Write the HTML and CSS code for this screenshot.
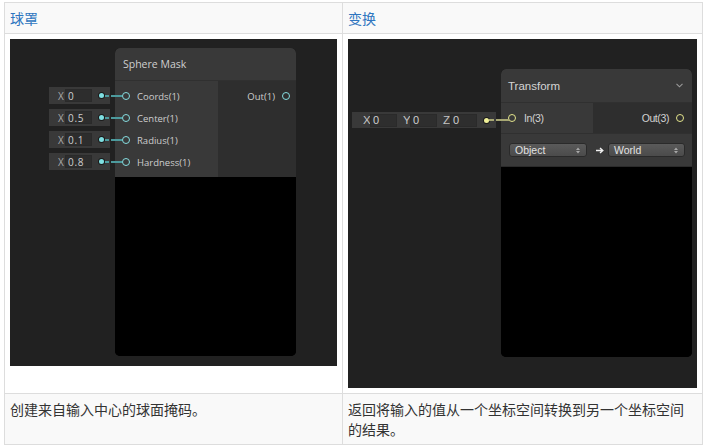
FILE: index.html
```html
<!DOCTYPE html>
<html>
<head>
<meta charset="utf-8">
<link rel="stylesheet" href="styles.css">
</head>
<body>
<table class="nodes">
  <colgroup><col class="c1"><col class="c2"></colgroup>
  <thead>
    <tr><th>球罩</th><th>变换</th></tr>
  </thead>
  <tbody>
    <tr class="pics">
      <td>
        <div class="canvas canvas-sm">
          <div class="fields">
            <div class="vfield"><span class="ax">X</span><span class="val">0</span><span class="dot"></span><span class="wire"></span></div>
            <div class="vfield"><span class="ax">X</span><span class="val">0.5</span><span class="dot"></span><span class="wire"></span></div>
            <div class="vfield"><span class="ax">X</span><span class="val">0.1</span><span class="dot"></span><span class="wire"></span></div>
            <div class="vfield"><span class="ax">X</span><span class="val">0.8</span><span class="dot"></span><span class="wire"></span></div>
          </div>
          <div class="node node-sphere">
            <div class="node-head">Sphere Mask</div>
            <div class="ports">
              <div class="ins">
                <div class="port"><i class="ring"></i>Coords(1)</div>
                <div class="port"><i class="ring"></i>Center(1)</div>
                <div class="port"><i class="ring"></i>Radius(1)</div>
                <div class="port"><i class="ring"></i>Hardness(1)</div>
              </div>
              <div class="outs">
                <div class="port port-out">Out(1)<i class="ring"></i></div>
              </div>
            </div>
            <div class="preview"></div>
          </div>
        </div>
      </td>
      <td>
        <div class="canvas canvas-lg">
          <div class="vec3">
            <span class="ax">X</span><span class="val">0</span>
            <span class="ax">Y</span><span class="val">0</span>
            <span class="ax">Z</span><span class="val">0</span>
            <span class="dot"></span><span class="wire"></span>
          </div>
          <div class="node node-transform">
            <div class="node-head">
              <span>Transform</span>
              <svg class="chev" width="7" height="5" viewBox="0 0 7 5"><polyline points="0.5,0.8 3.5,3.8 6.5,0.8" fill="none" stroke="#9a9a9a" stroke-width="1.1"/></svg>
            </div>
            <div class="ports">
              <div class="ins">
                <div class="port"><i class="ring"></i>In(3)</div>
              </div>
              <div class="outs">
                <div class="port port-out">Out(3)<i class="ring"></i></div>
              </div>
            </div>
            <div class="controls">
              <div class="select sel-a">Object<svg class="updown" width="4" height="7" viewBox="0 0 4 7"><path d="M0 3 L2 0.5 L4 3 Z M0 4 L2 6.5 L4 4 Z" fill="#a8a8a8"/></svg></div>
              <svg class="arrow" width="8" height="7" viewBox="0 0 8 7"><path d="M0 3.5 H6.5 M4 1 L6.8 3.5 L4 6" fill="none" stroke="#f0f0f0" stroke-width="1.4"/></svg>
              <div class="select sel-b">World<svg class="updown" width="4" height="7" viewBox="0 0 4 7"><path d="M0 3 L2 0.5 L4 3 Z M0 4 L2 6.5 L4 4 Z" fill="#a8a8a8"/></svg></div>
            </div>
            <div class="preview"></div>
          </div>
        </div>
      </td>
    </tr>
    <tr class="desc">
      <td>创建来自输入中心的球面掩码。</td>
      <td>返回将输入的值从一个坐标空间转换到另一个坐标空间的结果。</td>
    </tr>
  </tbody>
</table>
</body>
</html>
```

FILE: styles.css
```css
* { box-sizing: border-box; }

body {
  margin: 2px 0 0 4px;
  background: #fff;
  font-family: "Noto Sans CJK SC", sans-serif;
  font-size: 14px;
  color: #333;
}

.nodes {
  border-collapse: collapse;
  table-layout: fixed;
  width: 698px;
}
.c1 { width: 338px; }
.c2 { width: 360px; }

.nodes th,
.nodes td {
  border: 1px solid #ddd;
  padding: 5px;
  text-align: left;
  vertical-align: top;
  line-height: 20px;
}
.nodes th {
  font-weight: normal;
  color: #2f76c0;
  background: #f9f9f9;
}
.desc td { background: #f9f9f9; }
.pics td { background: #fff; }

/* canvas */
.canvas {
  position: relative;
  display: block;
  background: #212121;
  overflow: hidden;
  line-height: normal;
}
.canvas-sm { width: 327px; height: 327px; font-family: "Open Sans", sans-serif; }
.canvas-lg { width: 349px; height: 349px; font-family: "Liberation Sans", sans-serif; }

/* node */
.node {
  position: absolute;
  display: flex;
  flex-direction: column;
  border-radius: 5px;
  overflow: hidden;
  background: #000;
}
.node-head {
  display: flex;
  align-items: center;
  background: #393939;
  color: #cfcfcf;
  border-bottom: 1px solid #303030;
}
.ports { display: flex; }
.ins { background: #393939; }
.outs { flex: 1; background: #2e2e2e; }
.port {
  display: flex;
  align-items: center;
  color: #cdcdcd;
  white-space: nowrap;
}
.port-out { justify-content: flex-end; }
.ring {
  display: block;
  width: 8px;
  height: 8px;
  border-radius: 50%;
  flex: none;
}
.preview { flex: 1; background: #000; }

/* sphere mask node */
.node-sphere { left: 105px; top: 9px; width: 181px; height: 308px; }
.node-sphere .node-head { height: 33px; padding-left: 8px; font-size: 10.5px; }
.node-sphere .ports { height: 96px; }
.node-sphere .ins { width: 103px; padding-top: 4px; }
.node-sphere .port { height: 22px; font-size: 9.5px; }
.node-sphere .ins .port { padding-left: 7px; }
.node-sphere .ins .ring { margin-right: 7px; }
.node-sphere .outs { padding-top: 4px; }
.node-sphere .port-out { padding-right: 6px; }
.node-sphere .port-out .ring { margin-left: 7px; }
.node-sphere .ring { border: 1.5px solid #86dde0; }

/* left fields */
.fields {
  position: absolute;
  left: 39px;
  top: 48px;
  z-index: 2;
  display: flex;
  flex-direction: column;
  gap: 5px;
}
.vfield {
  position: relative;
  width: 61px;
  height: 17px;
  background: #393939;
  display: flex;
  align-items: center;
  font-size: 9.5px;
}
.ax { color: #a9a9a9; }
.vfield .ax { margin-left: 9px; width: 7px; font-size: 10px; }
.val {
  display: flex;
  align-items: center;
  width: 27px;
  height: 13px;
  background: #2d2d2d;
  border: 1px solid #2a2a2a;
  padding-left: 2px;
  color: #cfcfcf;
}
.vfield .val { letter-spacing: 0.7px; font-size: 10px; }
.dot {
  position: absolute;
  width: 5px;
  height: 5px;
  border-radius: 50%;
  top: 50%;
  margin-top: -2.5px;
  background: #7fdfe1;
  box-shadow: 0 0 0 1px #1b1b1b;
}
.vfield .dot { left: 50px; }
.wire {
  position: absolute;
  top: 50%;
  height: 2px;
  margin-top: -1px;
}
.vfield .wire {
  left: 56px;
  width: 17px;
  background: linear-gradient(90deg, #4c9a9d 0 4px, transparent 4px 6px, #4c9a9d 6px 100%);
}

/* transform node */
.node-transform { left: 153px; top: 30px; width: 191px; height: 288px; }
.node-transform .node-head {
  height: 34px;
  padding-left: 7px;
  padding-right: 9px;
  justify-content: space-between;
  font-size: 11.5px;
  color: #d4d4d4;
}
.node-transform .ports { height: 31px; border-bottom: 1px solid #303030; }
.node-transform .ins { width: 92px; }
.node-transform .port { height: 30px; font-size: 10.5px; letter-spacing: -0.4px; color: #d2d2d2; }
.node-transform .ins .port { padding-left: 7px; }
.node-transform .ins .ring { margin-right: 8px; }
.node-transform .port-out { padding-right: 8px; }
.node-transform .port-out .ring { margin-left: 7px; }
.node-transform .ring { border: 1.5px solid #e3e48c; }

.controls {
  height: 33px;
  display: flex;
  align-items: center;
  padding-left: 8px;
  background: #393939;
  border-bottom: 1px solid #2b2b2b;
}
.select {
  position: relative;
  height: 14px;
  display: flex;
  align-items: center;
  padding-left: 5px;
  font-size: 10.5px;
  color: #e2e2e2;
  background: linear-gradient(#5a5a5a, #4b4b4b);
  border: 1px solid #2a2a2a;
  border-radius: 3px;
}
.sel-a { width: 78px; }
.sel-b { width: 77px; }
.updown { position: absolute; right: 6px; top: 3px; }
.arrow { margin: 0 4px 0 9px; }

/* vector3 field */
.vec3 {
  position: absolute;
  left: 4px;
  top: 73px;
  z-index: 2;
  width: 144px;
  height: 16px;
  background: #393939;
  display: flex;
  align-items: center;
  font-size: 11.5px;
}
.vec3 .ax { width: 7px; color: #c4c4c4; }
.vec3 .ax:nth-child(1) { margin-left: 11px; }
.vec3 .ax:nth-child(3) { margin-left: 6px; }
.vec3 .ax:nth-child(5) { margin-left: 6px; }
.vec3 .val { height: 13px; background: #2e2e2e; font-size: 11px; }
.vec3 .dot { left: 131.5px; background: #f0f098; }
.vec3 .wire {
  left: 137px;
  width: 20px;
  background: linear-gradient(90deg, #a8a874 0 5px, transparent 5px 7px, #a8a874 7px 100%);
}
```
